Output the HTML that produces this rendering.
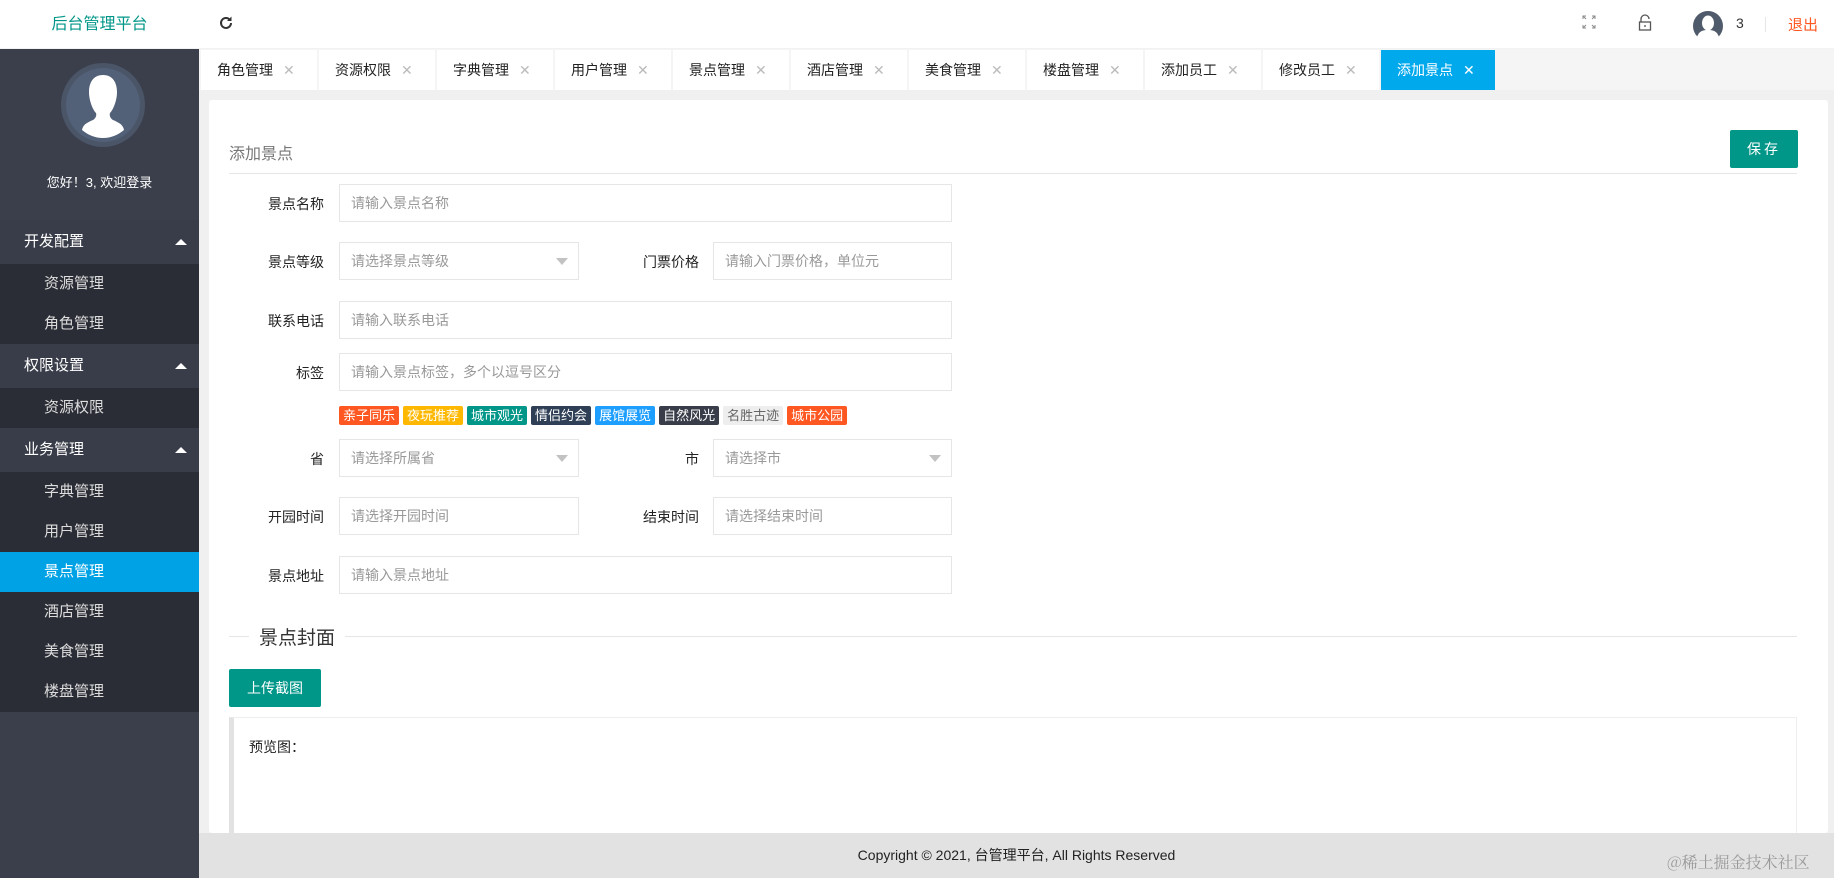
<!DOCTYPE html>
<html><head><meta charset="utf-8">
<style>
*{margin:0;padding:0;box-sizing:border-box}
body{width:1834px;height:878px;overflow:hidden;font-family:"Liberation Sans","Noto Sans CJK SC",sans-serif;font-size:14px;color:#333;background:#f0f0f0;position:relative}
.abs{position:absolute}
.header{left:0;top:0;width:1834px;height:49px;background:#fff;border-bottom:1px solid #f2f2f2}
.logo{left:0;top:0;width:199px;line-height:49px;text-align:center;color:#009688;font-size:16px}
.side{left:0;top:49px;width:199px;height:829px;background:#3b3f4b}
.mh{position:absolute;left:0;width:199px;height:44px;line-height:44px;padding-left:24px;color:#fff;font-size:15px;background:#393d49}
.mh:after{content:"";position:absolute;right:12px;top:19px;border:6px solid transparent;border-bottom:6px solid #fff;border-top:0}
.mi{position:absolute;left:0;width:199px;height:40px;line-height:40px;padding-left:44px;color:#ddd;font-size:15px;background:#2a2d36}
.mi.on{background:#00a2e6;color:#fff}
.tabs{left:199px;top:49px;width:1635px;height:41px;background:#f5f5f5}
.tab{position:absolute;top:1px;height:40px;width:116px;background:#fff;line-height:40px;padding-left:16px;font-size:14px;color:#222}
.tab i{font-style:normal;color:#bbb;margin-left:10px;font-size:14px}
.tab.on{background:#00a8ec;color:#fff}
.tab.on i{color:#fff}
.card{left:209px;top:100px;width:1619px;height:733px;background:#fff;border-radius:3px}
.lbl{position:absolute;width:120px;text-align:right;font-size:14px;color:#222}
.inp{position:absolute;height:38px;border:1px solid #e6e6e6;line-height:36px;padding-left:11px;color:#999;font-size:14px;background:#fff}
.sel:after{content:"";position:absolute;right:10px;top:15px;border:6px solid transparent;border-top:7px solid #c2c2c2;border-bottom:0}
.tag{display:inline-block;height:19px;line-height:19px;padding:0 4px;color:#fff;font-size:13px;margin-right:4px;border-radius:2px}
.footer{left:199px;top:833px;width:1635px;height:45px;background:#e2e2e2;text-align:center;line-height:45px;font-size:14px;color:#222}
</style></head><body>
<div class="abs header"></div>
<div class="abs logo">后台管理平台</div>
<svg class="abs" style="left:218px;top:15px" width="16" height="16" viewBox="0 0 16 16"><path d="M13 8a5 5 0 1 1-1.5-3.6" fill="none" stroke="#333" stroke-width="2"/><path d="M13.5 1.5v4.5h-4.5z" fill="#333"/></svg>
<svg class="abs" style="left:1582px;top:15px" width="14" height="14" viewBox="0 0 14 14" fill="none" stroke="#888" stroke-width="1"><path d="M1 4V1h3M1 1l3 3M10 1h3v3M13 1l-3 3M1 10v3h3M1 13l3-3M13 10v3h-3M13 13l-3-3"/></svg>
<svg class="abs" style="left:1638px;top:14px" width="14" height="18" viewBox="0 0 14 18" fill="none" stroke="#555" stroke-width="1.3"><path d="M3 8V5a4 4 0 0 1 8 0"/><rect x="1.5" y="8" width="11" height="8"/><path d="M7 11v2"/></svg>
<svg class="abs" style="left:1692px;top:10px" width="32" height="32" viewBox="0 0 32 32"><circle cx="16" cy="16" r="15" fill="#4f5a6b"/><ellipse cx="16" cy="13" rx="6" ry="7.5" fill="#fff"/><path d="M5 27c2-6 6-7 11-7s9 1 11 7a14 14 0 0 1-22 0z" fill="#fff"/></svg>
<div class="abs" style="left:1736px;top:15px;font-size:14px;color:#333">3</div>
<div class="abs" style="left:1765px;top:17px;width:1px;height:15px;background:#e6e6e6"></div>
<div class="abs" style="left:1788px;top:14px;font-size:15px;color:#ff5722">退出</div>

<div class="abs side">
<svg class="abs" style="left:61px;top:14px" width="84" height="84" viewBox="0 0 84 84"><circle cx="42" cy="42" r="42" fill="#4b5568"/><circle cx="42" cy="42" r="37" fill="#526078"/><path d="M42 12c-10 0-14 8-14 17s4 18 7 21c1 3-1 6-3 7-7 3-10 5-11 10 6 5 13 8 21 8s15-3 21-8c-1-5-4-7-11-10-2-1-4-4-3-7 3-3 7-12 7-21s-4-17-14-17z" fill="#fff"/></svg>
<div class="abs" style="left:0;top:123px;width:199px;text-align:center;color:#fff;font-size:13px">您好！3, 欢迎登录</div>
<div class="mh" style="top:171px">开发配置</div>
<div class="mi" style="top:215px">资源管理</div>
<div class="mi" style="top:255px">角色管理</div>
<div class="mh" style="top:295px">权限设置</div>
<div class="mi" style="top:339px">资源权限</div>
<div class="mh" style="top:379px">业务管理</div>
<div class="mi" style="top:423px">字典管理</div>
<div class="mi" style="top:463px">用户管理</div>
<div class="mi on" style="top:503px">景点管理</div>
<div class="mi" style="top:543px">酒店管理</div>
<div class="mi" style="top:583px">美食管理</div>
<div class="mi" style="top:623px">楼盘管理</div>
</div>

<div class="abs tabs">
<div class="tab" style="left:2px">角色管理<i>✕</i></div>
<div class="tab" style="left:120px">资源权限<i>✕</i></div>
<div class="tab" style="left:238px">字典管理<i>✕</i></div>
<div class="tab" style="left:356px">用户管理<i>✕</i></div>
<div class="tab" style="left:474px">景点管理<i>✕</i></div>
<div class="tab" style="left:592px">酒店管理<i>✕</i></div>
<div class="tab" style="left:710px">美食管理<i>✕</i></div>
<div class="tab" style="left:828px">楼盘管理<i>✕</i></div>
<div class="tab" style="left:946px">添加员工<i>✕</i></div>
<div class="tab" style="left:1064px">修改员工<i>✕</i></div>
<div class="tab on" style="left:1182px;width:114px">添加景点<i>✕</i></div>
</div>

<div class="abs card"></div>
<div class="abs" style="left:229px;top:140px;font-size:16px;color:#777">添加景点</div>
<div class="abs" style="left:229px;top:173px;width:1568px;height:1px;background:#e6e6e6"></div>
<div class="abs" style="left:1730px;top:130px;width:68px;height:38px;background:#009688;color:#fff;text-align:center;line-height:38px;font-size:14px;letter-spacing:3px;border-radius:2px">保存</div>

<div class="lbl" style="left:204px;top:194px">景点名称</div>
<div class="inp" style="left:339px;top:184px;width:613px">请输入景点名称</div>
<div class="lbl" style="left:204px;top:252px">景点等级</div>
<div class="inp sel" style="left:339px;top:242px;width:240px">请选择景点等级</div>
<div class="lbl" style="left:579px;top:252px">门票价格</div>
<div class="inp" style="left:713px;top:242px;width:239px">请输入门票价格，单位元</div>
<div class="lbl" style="left:204px;top:311px">联系电话</div>
<div class="inp" style="left:339px;top:301px;width:613px">请输入联系电话</div>
<div class="lbl" style="left:204px;top:363px">标签</div>
<div class="inp" style="left:339px;top:353px;width:613px">请输入景点标签，多个以逗号区分</div>
<div class="abs" style="left:339px;top:406px;white-space:nowrap;font-size:0">
<span class="tag" style="background:#ff5722">亲子同乐</span><span class="tag" style="background:#ffb800">夜玩推荐</span><span class="tag" style="background:#009688">城市观光</span><span class="tag" style="background:#2f4056">情侣约会</span><span class="tag" style="background:#1e9fff">展馆展览</span><span class="tag" style="background:#393d49">自然风光</span><span class="tag" style="background:#eee;color:#666">名胜古迹</span><span class="tag" style="background:#ff5722">城市公园</span>
</div>
<div class="lbl" style="left:204px;top:449px">省</div>
<div class="inp sel" style="left:339px;top:439px;width:240px">请选择所属省</div>
<div class="lbl" style="left:579px;top:449px">市</div>
<div class="inp sel" style="left:713px;top:439px;width:239px">请选择市</div>
<div class="lbl" style="left:204px;top:507px">开园时间</div>
<div class="inp" style="left:339px;top:497px;width:240px">请选择开园时间</div>
<div class="lbl" style="left:579px;top:507px">结束时间</div>
<div class="inp" style="left:713px;top:497px;width:239px">请选择结束时间</div>
<div class="lbl" style="left:204px;top:566px">景点地址</div>
<div class="inp" style="left:339px;top:556px;width:613px">请输入景点地址</div>

<div class="abs" style="left:229px;top:636px;width:1568px;height:1px;background:#e6e6e6"></div>
<div class="abs" style="left:249px;top:623px;padding:0 10px;background:#fff;font-size:19px;color:#333">景点封面</div>
<div class="abs" style="left:229px;top:669px;width:92px;height:38px;background:#009688;color:#fff;text-align:center;line-height:38px;font-size:14px;border-radius:2px">上传截图</div>
<div class="abs" style="left:229px;top:717px;width:1568px;height:120px;border:1px solid #eee;border-left:5px solid #e2e2e2"></div>
<div class="abs" style="left:249px;top:737px;font-size:14px;color:#222">预览图：</div>

<div class="abs footer">Copyright © 2021, 台管理平台, All Rights Reserved</div>
<div class="abs" style="left:1667px;top:850px;font-size:16px;color:#999;font-family:'Noto Serif CJK SC',serif">@稀土掘金技术社区</div>
</body></html>
